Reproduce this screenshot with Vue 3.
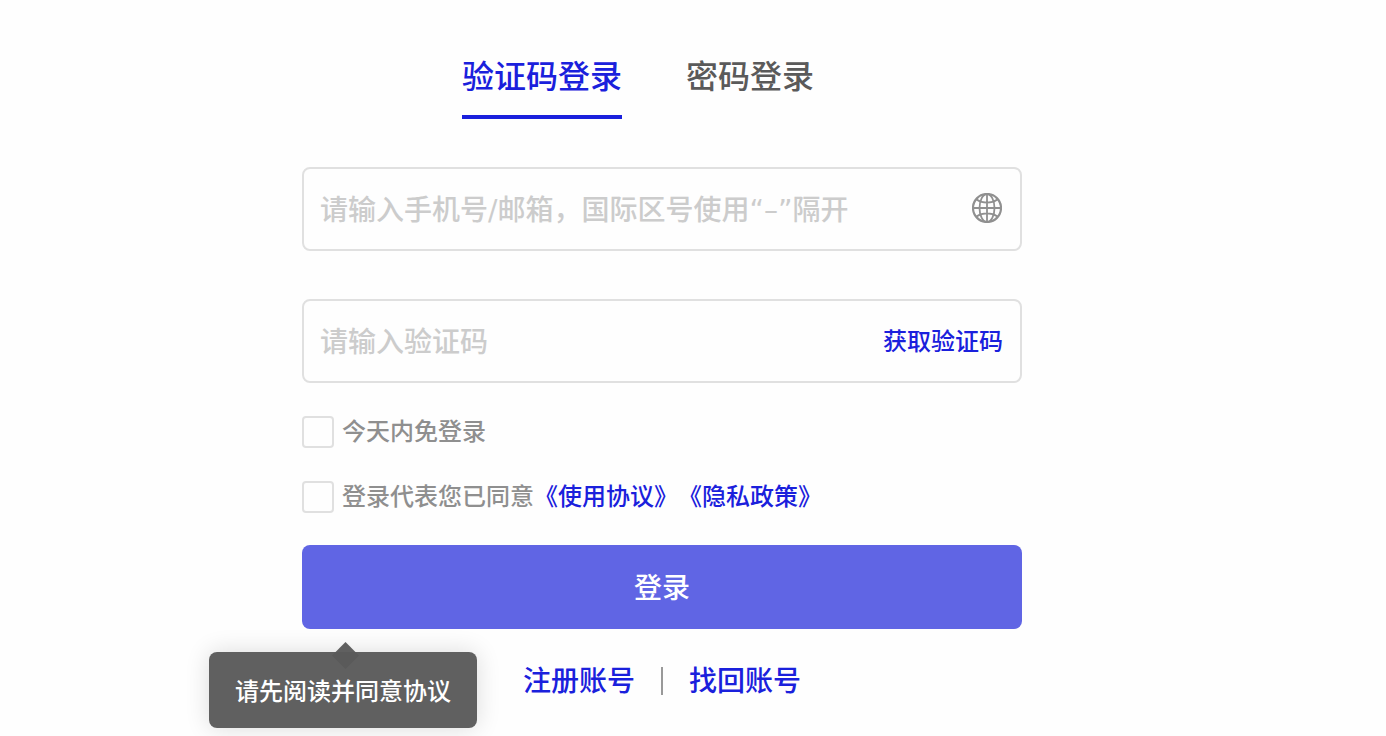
<script setup>
import { ref } from 'vue'

const tabs = ['验证码登录', '密码登录']
const activeTab = ref(0)
const account = ref('')
const code = ref('')
const remember = ref(false)
const agreed = ref(false)
</script>

<template>
  <main class="page">
    <form class="login" @submit.prevent>
      <div class="tabs" role="tablist">
        <button
          v-for="(tab, i) in tabs"
          :key="tab"
          type="button"
          role="tab"
          class="tab"
          :class="{ active: i === activeTab }"
          :aria-selected="i === activeTab"
          @click="activeTab = i"
        >{{ tab }}</button>
      </div>

      <div class="field">
        <input v-model="account" class="entry" type="text" aria-label="手机号/邮箱" placeholder="请输入手机号/邮箱，国际区号使用“–”隔开" />
        <button type="button" class="region" aria-label="国际区号">
          <svg class="globe" viewBox="0 0 30 30" fill="none" stroke="#909090" stroke-width="1.8">
            <circle cx="15" cy="15" r="14" stroke-width="2.200" />
            <ellipse cx="15" cy="15" rx="7.500" ry="14" />
            <path d="M15 1v28M1 15h28M4.500 6.500c6 4.200 15 4.200 21 0M4.500 23.500c6-4.200 15-4.200 21 0" />
          </svg>
        </button>
      </div>

      <div class="field">
        <input v-model="code" class="entry" type="text" aria-label="验证码" placeholder="请输入验证码" />
        <button type="button" class="send">获取验证码</button>
      </div>

      <div class="options">
        <div class="option">
          <input id="remember" v-model="remember" class="box" type="checkbox" />
          <label for="remember">今天内免登录</label>
        </div>
        <div class="option">
          <input id="agree" v-model="agreed" class="box" type="checkbox" />
          <label for="agree">登录代表您已同意</label>
          <span class="terms"><a href="#terms">《使用协议》</a><a href="#privacy">《隐私政策》</a></span>
        </div>
      </div>

      <button type="submit" class="submit">登录</button>

      <div class="footer">
        <a href="#register">注册账号</a>
        <span class="divider"></span>
        <a href="#recover">找回账号</a>
        <div v-if="!agreed" class="tip" role="tooltip">请先阅读并同意协议</div>
      </div>
    </form>
  </main>
</template>

<style>
body {
  background: #fefefe;
}
</style>

<style scoped>
.page {
  display: flex;
  justify-content: center;
  box-sizing: border-box;
  min-height: 100vh;
  padding: 53px 62px 0 0;
  font-family: Inter, "Noto Sans CJK SC", sans-serif;
  font-weight: 500;
  color: #8f8f8f;
}
.login {
  width: 100%;
  max-width: 720px;
}
button {
  padding: 0;
  border: 0;
  background: none;
  font: inherit;
  cursor: pointer;
}
a {
  color: #1a20dc;
  text-decoration: none;
}
.tabs {
  display: flex;
  justify-content: center;
  gap: 64px;
  padding-right: 48px;
  margin-bottom: 48px;
}
.tab {
  padding-bottom: 14px;
  border-bottom: 4px solid transparent;
  font-size: 32px;
  line-height: 48px;
  color: #5a5a5a;
}
.tab.active {
  border-color: #1a20dc;
  color: #1a20dc;
}
.field {
  display: flex;
  align-items: center;
  height: 84px;
  box-sizing: border-box;
  margin-bottom: 48px;
  padding: 0 17px 0 16px;
  border: 2px solid #e0e0e0;
  border-radius: 8px;
}
.entry {
  flex: 1;
  min-width: 0;
  padding: 4px 0 0;
  border: 0;
  outline: 0;
  background: none;
  font: inherit;
  font-family: "DejaVu Sans", "Noto Sans CJK SC", sans-serif;
  font-size: 28px;
  line-height: 42px;
  color: #333;
}
.entry::placeholder {
  color: #ccc;
  opacity: 1;
}
.region {
  display: flex;
  padding: 0 1px 2px 0;
}
.globe {
  width: 30px;
  height: 30px;
}
.send {
  padding-top: 2px;
  font-size: 24px;
  line-height: 36px;
  color: #1a20dc;
}
.options {
  display: grid;
  gap: 33px;
  margin: -15px 0 32px;
  font-size: 24px;
  line-height: 32px;
}
.option,
.terms {
  display: flex;
  align-items: center;
}
.box {
  appearance: none;
  width: 32px;
  height: 32px;
  margin: 0 8px 0 0;
  border: 2px solid #e0e0e0;
  border-radius: 4px;
}
.box:checked {
  background: #6065e4;
}
.submit {
  display: block;
  width: 100%;
  height: 84px;
  padding-bottom: 2px;
  border-radius: 8px;
  background: #6065e4;
  font-size: 28px;
  color: #fff;
}
.footer {
  position: relative;
  display: flex;
  justify-content: center;
  align-items: center;
  gap: 26px;
  padding-top: 31px;
  font-size: 28px;
  line-height: 42px;
}
.divider {
  width: 2px;
  height: 28px;
  background: #999;
}
.tip {
  position: absolute;
  top: 23px;
  left: -93px;
  padding: 22px 26px 18px;
  border-radius: 8px;
  background: rgba(90, 90, 90, 0.96);
  box-shadow: 0 0 24px rgba(0, 0, 0, 0.14);
  font-size: 24px;
  line-height: 36px;
  white-space: nowrap;
  color: #fff;
}
.tip::before {
  content: "";
  position: absolute;
  top: -6px;
  left: 127px;
  width: 19px;
  height: 19px;
  background: rgba(90, 90, 90, 0.96);
  transform: rotate(45deg);
}
</style>
